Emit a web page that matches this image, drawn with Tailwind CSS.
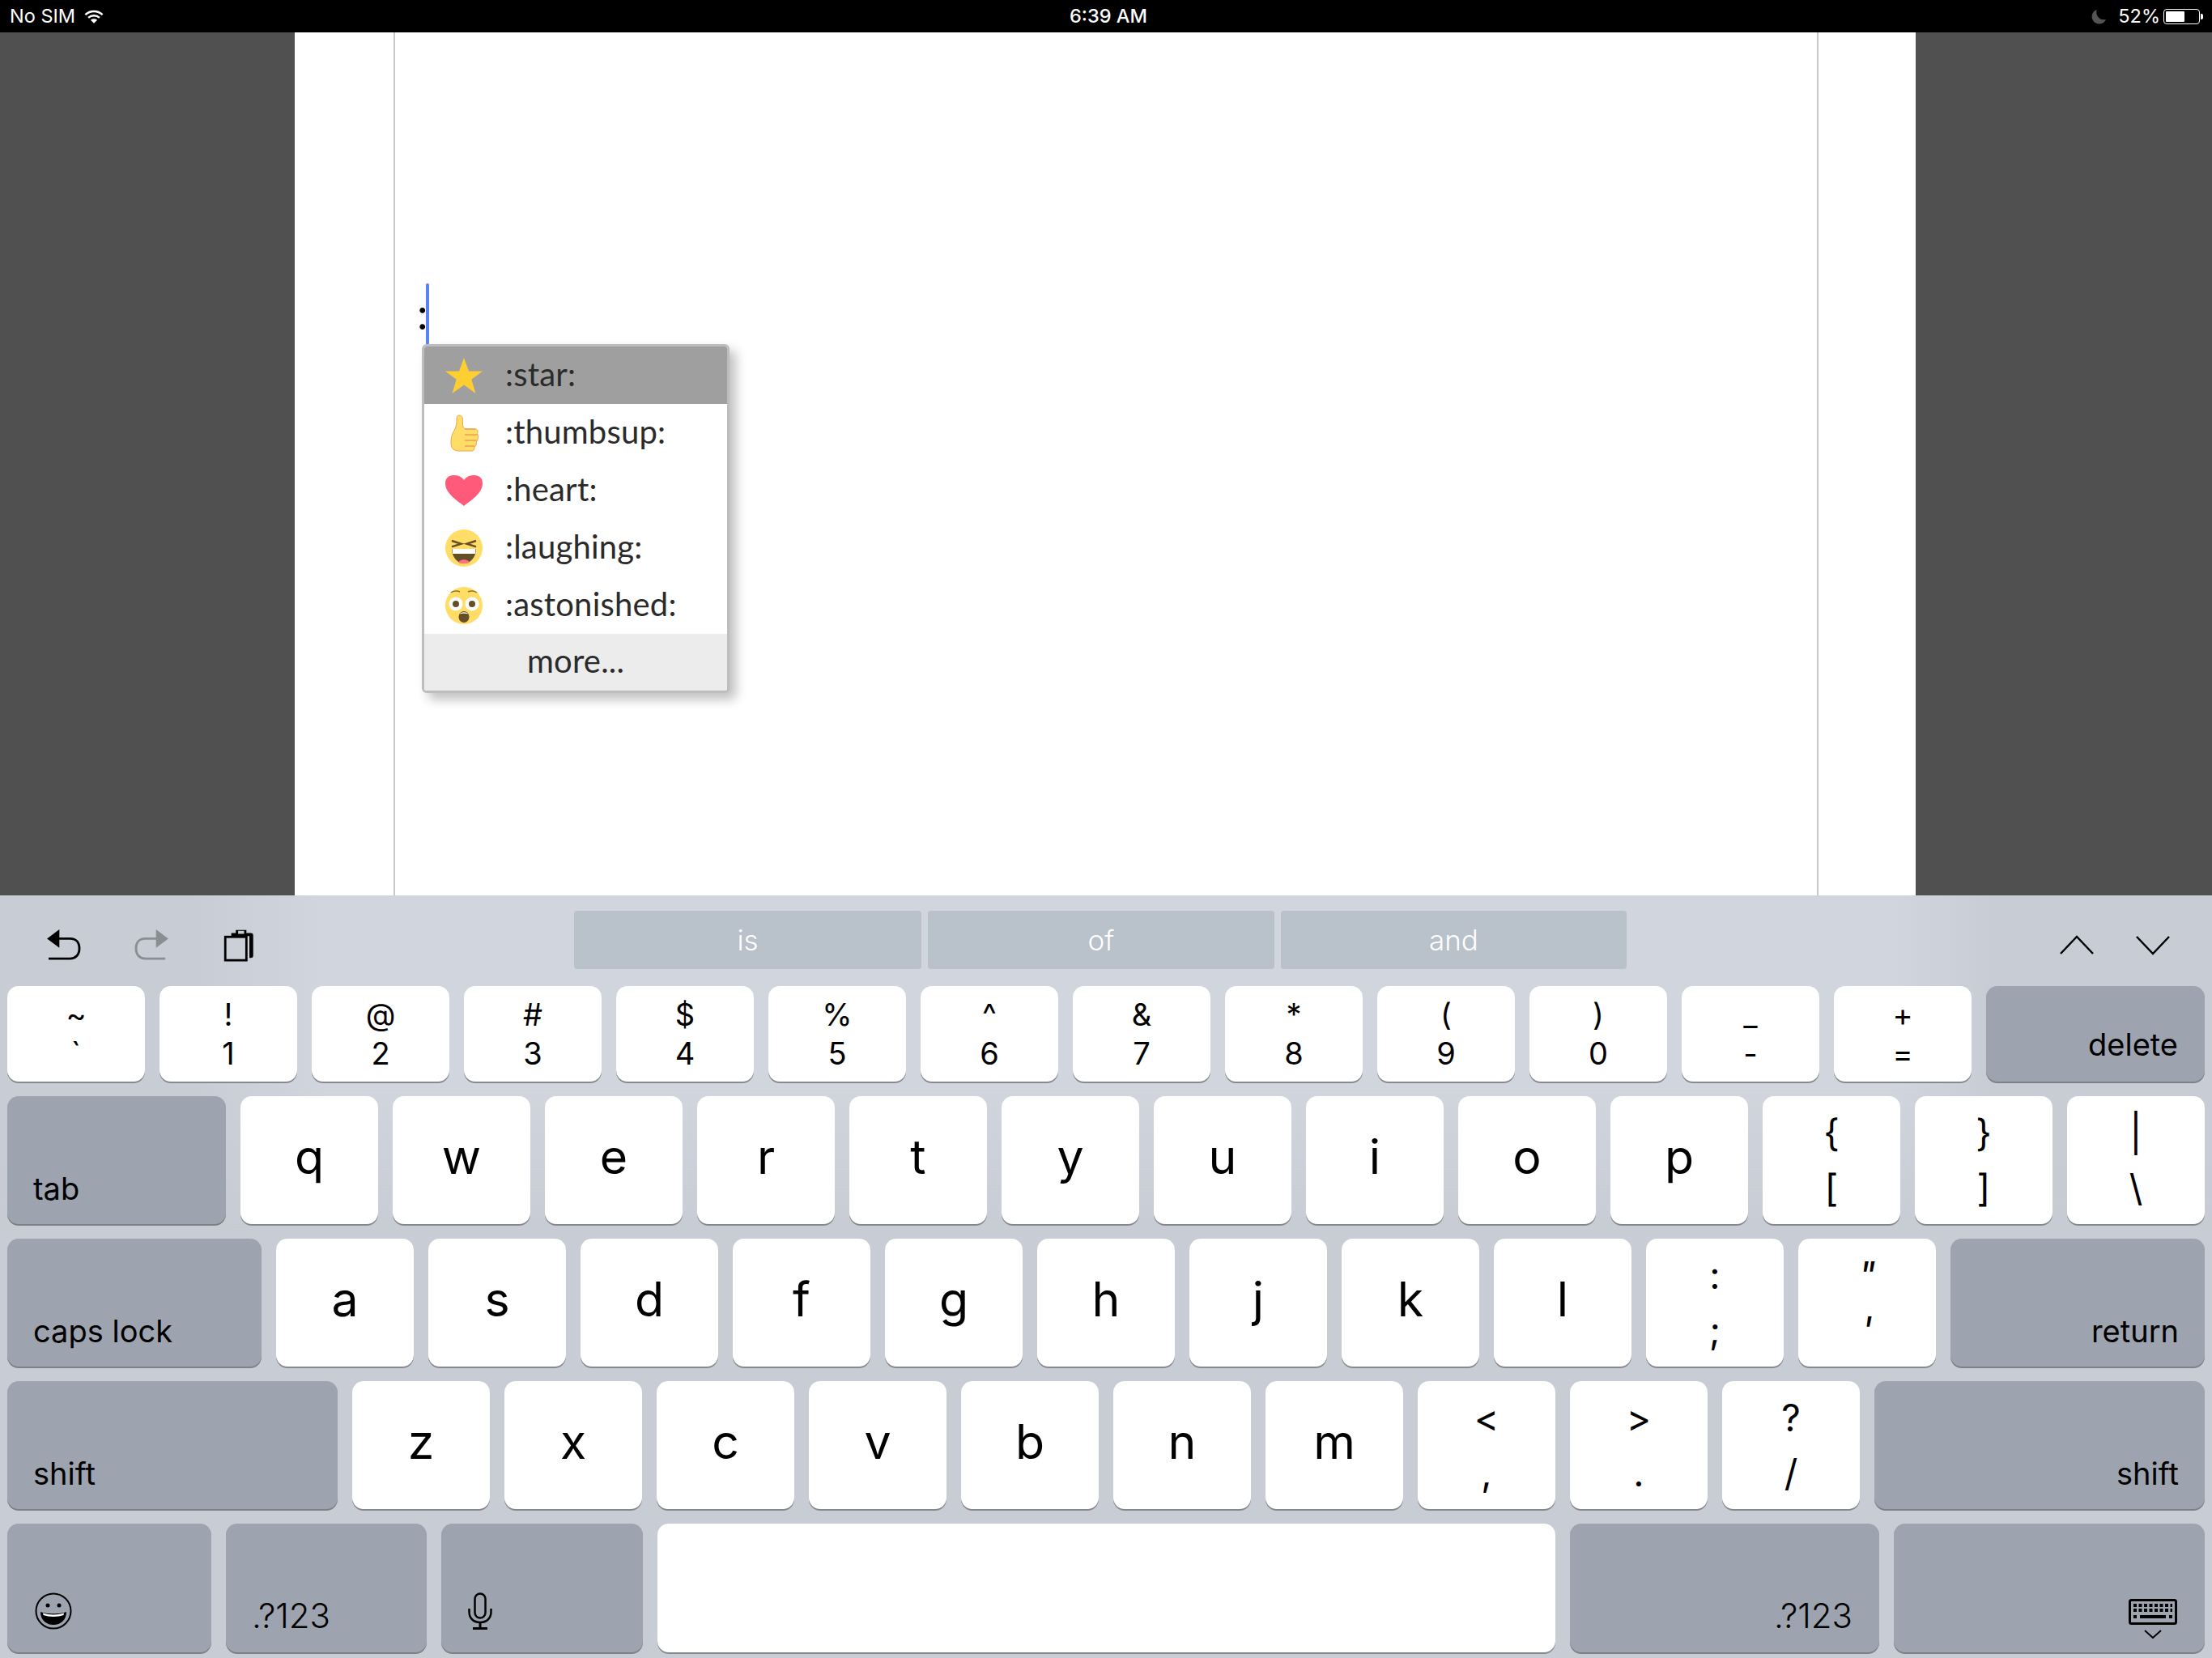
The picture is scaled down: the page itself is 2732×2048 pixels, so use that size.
<!DOCTYPE html>
<html lang="en">
<head>
    <meta charset="UTF-8">
    <title>Emoji Picker</title>
    <script src="https://cdn.jsdelivr.net/npm/@tailwindcss/browser@4"></script>
</head>
<body class="w-[2732px] h-[2048px] overflow-hidden flex flex-col bg-[#505050] font-['Inter',sans-serif]">
    <!-- Status bar -->
    <div class="h-[40px] shrink-0 bg-black text-white text-[23.500px] relative flex items-center justify-between pl-[12px] pr-[11px]">
        <div class="flex items-center gap-[11px]">
            <span>No SIM</span>
            <svg width="24" height="19" viewBox="0 0 26 20" fill="none" stroke="white" stroke-width="2.6">
                <path d="M1.5 7.5C8 1.5 18 1.5 24.5 7.5"/>
                <path d="M5.5 11.5C9.800 7.800 16.200 7.800 20.500 11.500"/>
                <path d="M13 19L8.500 14.600C11.200 12.600 14.800 12.600 17.500 14.600Z" fill="white" stroke="none"/>
            </svg>
        </div>
        <span class="absolute left-[1321px] font-medium">6:39 AM</span>
        <div class="flex items-center">
            <svg width="19" height="19" viewBox="0 0 20 20" class="mr-[14px]"><path d="M7 1A9.500 9.500 0 1 0 19 13.500C13 16 4.500 10 7 1Z" fill="#555"/></svg>
            <span>52%</span>
            <div class="ml-[4px] w-[45px] h-[19px] border border-white rounded-[4px] p-[2px]">
                <div class="w-[23px] h-full bg-white rounded-[1px]"></div>
            </div>
            <div class="w-[3px] h-[7px] bg-white rounded-r-[2px] ml-[1px]"></div>
        </div>
    </div>

    <!-- Document area -->
    <div class="h-[1066px] shrink-0 flex justify-center">
        <div class="w-[2002px] ml-[-2px] h-full bg-white relative px-[122px]">
            <div class="w-[1760px] h-full border-x-2 border-[#c8c8c8] relative">
                <!-- caret and typed colon -->
                <span class="absolute left-[27px] top-[322px] text-[54px] leading-[50px] text-black font-['Lato',sans-serif]">:</span>
                <div class="absolute left-[38px] top-[310px] w-[4px] h-[76px] bg-[#5b82f2] rounded-[2px]"></div>

                <!-- Emoji menu -->
                <div class="absolute left-[33px] top-[385px] w-[380px] border-[3px] border-[#bdbdbd] rounded-[6px] bg-white overflow-hidden shadow-[8px_8px_14px_rgba(0,0,0,0.25)] text-[#2b2b2b] text-[40px] tracking-[0.2px] font-['Lato',sans-serif]">
                    <div class="h-[71px] bg-[#9f9f9f] flex items-center pl-[26px]">
                        <svg width="46" height="46" viewBox="0 0 46 46" class="mr-[28px]"><path d="M23 1L29 17.500H46L32.300 27.800L37.500 45L23 34.500L8.500 45L13.700 27.800L0 17.500H17Z" fill="#ffce31"/></svg>
                        <span class="mb-[4px]">:star:</span>
                    </div>
                    <div class="h-[71px] flex items-center pl-[26px]">
                        <svg width="46" height="46" viewBox="0 0 46 46" class="mr-[28px]">
                            <path d="M17 1C21 1 22 5 21.500 10C21 14 22 17 25 18H37C39 18 40 19 40 21C40 22.500 40 23 39 24C41 25 41 28 40 30C40 32 39 33 38 34C39 36 38 39 36 40C36 43 35 45 33 45H18C11 45 7 43 7 35C7 27 9 23 12 18C14 14 14 10 14 5C14 3 15 1 17 1Z" fill="#ffdd67" stroke="#eba352" stroke-width="1"/>
                            <path d="M24 18H37M24 25H40M24 32H39M24 39H36" stroke="#eba352" stroke-width="1.500" fill="none"/>
                        </svg>
                        <span class="mb-[4px]">:thumbsup:</span>
                    </div>
                    <div class="h-[71px] flex items-center pl-[26px]">
                        <svg width="46" height="46" viewBox="0 0 46 46" class="mr-[28px]"><path d="M23 42C16 36 0 27 0 14C0 6 6 4 11 4C17 4 21 7 23 10C25 7 29 4 35 4C40 4 46 6 46 14C46 27 30 36 23 42Z" fill="#ff5a79"/></svg>
                        <span class="mb-[4px]">:heart:</span>
                    </div>
                    <div class="h-[71px] flex items-center pl-[26px]">
                        <svg width="46" height="46" viewBox="0 0 46 46" class="mr-[28px]">
                            <circle cx="23" cy="23" r="23" fill="#ffdd67"/>
                            <path d="M8 24H38C38 34 31 42 23 42C15 42 8 34 8 24Z" fill="#664e27"/>
                            <path d="M8.500 24H37.500L37 30H9Z" fill="white"/>
                            <path d="M16 41C18 36 28 36 30 41C27 42.500 19 42.500 16 41Z" fill="#ff717f"/>
                            <path d="M8 14L19.500 17.800L8 21.400M38 14L26.500 17.800L38 21.400" stroke="#664e27" stroke-width="2.500" fill="none"/>
                        </svg>
                        <span class="mb-[4px]">:laughing:</span>
                    </div>
                    <div class="h-[71px] flex items-center pl-[26px]">
                        <svg width="46" height="46" viewBox="0 0 46 46" class="mr-[28px]">
                            <circle cx="23" cy="23" r="23" fill="#ffdd67"/>
                            <circle cx="13" cy="21" r="8.500" fill="white"/>
                            <circle cx="33" cy="21" r="8.500" fill="white"/>
                            <circle cx="13" cy="21" r="4" fill="#664e27"/>
                            <circle cx="33" cy="21" r="4" fill="#664e27"/>
                            <ellipse cx="23" cy="37" rx="6.500" ry="7" fill="#664e27"/>
                            <path d="M17.500 33.500C20 30.500 26 30.500 28.500 33.500C26 32.500 20 32.500 17.500 33.500Z" fill="white"/>
                            <path d="M7 7C10 4.500 15 4.500 18 6M28 6C31 4.500 36 4.500 39 7" stroke="#917524" stroke-width="1.500" fill="none"/>
                        </svg>
                        <span class="mb-[4px]">:astonished:</span>
                    </div>
                    <div class="h-[70px] bg-[#ececec] flex items-center justify-center"><span class="mb-[4px]">more...</span></div>
                </div>
            </div>
        </div>
    </div>

    <!-- Keyboard -->
    <div class="flex-1 relative isolate bg-[#c8ccd4] flex flex-col gap-[18px] px-[9px] text-black">
        <!-- lighter band where the white page blurs through -->
        <div class="absolute -z-10 inset-x-0 top-0 h-[420px] bg-[linear-gradient(90deg,#c8ccd4_0,#c8ccd4_240px,#d1d5dd_400px,#d1d5dd_2340px,#c8ccd4_2460px,#c8ccd4_100%)] [mask-image:linear-gradient(to_bottom,black_55%,transparent)]"></div>

        <!-- Shortcut bar -->
        <div class="h-[94px] shrink-0 relative flex items-center pt-[28px]">
            <svg width="42" height="38" viewBox="0 0 44 40" class="ml-[49px]" fill="none">
                <path d="M0 12L16 0V24Z" fill="black"/>
                <path d="M12 12H30C38 12 42 17 42 25C42 33 37 38 30 38H2" stroke="black" stroke-width="3"/>
            </svg>
            <svg width="42" height="38" viewBox="0 0 44 40" class="ml-[66px]" fill="none">
                <path d="M44 12L28 0V24Z" fill="#8a8d92"/>
                <path d="M32 12H14C6 12 2 17 2 25C2 33 7 38 14 38H40" stroke="#8a8d92" stroke-width="3"/>
            </svg>
            <svg width="38" height="41" viewBox="0 0 40 44" class="ml-[68px]" fill="none">
                <path d="M10 6H16V2H30V6H36C38 6 39 7 39 9V36C39 38 38 39 36 39H34V10H10Z" fill="black"/>
                <path d="M19 3H27V7H19Z" fill="#c9cdd5"/>
                <rect x="2" y="11" width="28" height="31" stroke="black" stroke-width="3"/>
            </svg>
            <div class="absolute left-[700px] top-[19px] flex gap-[8px] text-white text-[35px]">
                <div class="w-[429px] h-[72px] bg-[#b9c1ca] rounded-[4px] flex items-center justify-center font-light">is</div>
                <div class="w-[428px] h-[72px] bg-[#b9c1ca] rounded-[4px] flex items-center justify-center font-light">of</div>
                <div class="w-[427px] h-[72px] bg-[#b9c1ca] rounded-[4px] flex items-center justify-center font-light">and</div>
            </div>
            <svg width="44" height="26" viewBox="0 0 44 26" class="absolute left-[2534px] top-[48px]" fill="none"><path d="M2 24L22 3L42 24" stroke="black" stroke-width="2.500"/></svg>
            <svg width="44" height="26" viewBox="0 0 44 26" class="absolute left-[2628px] top-[48px]" fill="none"><path d="M2 3L22 24L42 3" stroke="black" stroke-width="2.500"/></svg>
        </div>

        <!-- Row 1 -->
        <div class="h-[118px] shrink-0 flex gap-[18px]">
            <div class="w-[170px] bg-white rounded-[14px] shadow-[0_2px_0_#85888e] flex flex-col items-center justify-center text-[38px] leading-[48px]"><span>~</span><span>`</span></div>
            <div class="w-[170px] bg-white rounded-[14px] shadow-[0_2px_0_#85888e] flex flex-col items-center justify-center text-[38px] leading-[48px]"><span>!</span><span>1</span></div>
            <div class="w-[170px] bg-white rounded-[14px] shadow-[0_2px_0_#85888e] flex flex-col items-center justify-center text-[38px] leading-[48px]"><span>@</span><span>2</span></div>
            <div class="w-[170px] bg-white rounded-[14px] shadow-[0_2px_0_#85888e] flex flex-col items-center justify-center text-[38px] leading-[48px]"><span>#</span><span>3</span></div>
            <div class="w-[170px] bg-white rounded-[14px] shadow-[0_2px_0_#85888e] flex flex-col items-center justify-center text-[38px] leading-[48px]"><span>$</span><span>4</span></div>
            <div class="w-[170px] bg-white rounded-[14px] shadow-[0_2px_0_#85888e] flex flex-col items-center justify-center text-[38px] leading-[48px]"><span>%</span><span>5</span></div>
            <div class="w-[170px] bg-white rounded-[14px] shadow-[0_2px_0_#85888e] flex flex-col items-center justify-center text-[38px] leading-[48px]"><span>^</span><span>6</span></div>
            <div class="w-[170px] bg-white rounded-[14px] shadow-[0_2px_0_#85888e] flex flex-col items-center justify-center text-[38px] leading-[48px]"><span>&amp;</span><span>7</span></div>
            <div class="w-[170px] bg-white rounded-[14px] shadow-[0_2px_0_#85888e] flex flex-col items-center justify-center text-[38px] leading-[48px]"><span>*</span><span>8</span></div>
            <div class="w-[170px] bg-white rounded-[14px] shadow-[0_2px_0_#85888e] flex flex-col items-center justify-center text-[38px] leading-[48px]"><span>(</span><span>9</span></div>
            <div class="w-[170px] bg-white rounded-[14px] shadow-[0_2px_0_#85888e] flex flex-col items-center justify-center text-[38px] leading-[48px]"><span>)</span><span>0</span></div>
            <div class="w-[170px] bg-white rounded-[14px] shadow-[0_2px_0_#85888e] flex flex-col items-center justify-center text-[38px] leading-[48px]"><span>_</span><span>-</span></div>
            <div class="w-[170px] bg-white rounded-[14px] shadow-[0_2px_0_#85888e] flex flex-col items-center justify-center text-[38px] leading-[48px]"><span>+</span><span>=</span></div>
            <div class="flex-1 bg-[#9ea4af] rounded-[14px] shadow-[0_2px_0_#7c8087] flex items-end justify-end pr-[33px] pb-[23px] text-[38px] leading-[45px]">delete</div>
        </div>

        <!-- Row 2 -->
        <div class="h-[158px] shrink-0 flex gap-[18px]">
            <div class="w-[270px] bg-[#9ea4af] rounded-[14px] shadow-[0_2px_0_#7c8087] flex items-end pl-[32px] pb-[21px] text-[38px] leading-[45px]">tab</div>
            <div class="w-[170px] bg-white rounded-[14px] shadow-[0_2px_0_#85888e] flex items-center justify-center pb-[8px] text-[59px]">q</div>
            <div class="w-[170px] bg-white rounded-[14px] shadow-[0_2px_0_#85888e] flex items-center justify-center pb-[8px] text-[59px]">w</div>
            <div class="w-[170px] bg-white rounded-[14px] shadow-[0_2px_0_#85888e] flex items-center justify-center pb-[8px] text-[59px]">e</div>
            <div class="w-[170px] bg-white rounded-[14px] shadow-[0_2px_0_#85888e] flex items-center justify-center pb-[8px] text-[59px]">r</div>
            <div class="w-[170px] bg-white rounded-[14px] shadow-[0_2px_0_#85888e] flex items-center justify-center pb-[8px] text-[59px]">t</div>
            <div class="w-[170px] bg-white rounded-[14px] shadow-[0_2px_0_#85888e] flex items-center justify-center pb-[8px] text-[59px]">y</div>
            <div class="w-[170px] bg-white rounded-[14px] shadow-[0_2px_0_#85888e] flex items-center justify-center pb-[8px] text-[59px]">u</div>
            <div class="w-[170px] bg-white rounded-[14px] shadow-[0_2px_0_#85888e] flex items-center justify-center pb-[8px] text-[59px]">i</div>
            <div class="w-[170px] bg-white rounded-[14px] shadow-[0_2px_0_#85888e] flex items-center justify-center pb-[8px] text-[59px]">o</div>
            <div class="w-[170px] bg-white rounded-[14px] shadow-[0_2px_0_#85888e] flex items-center justify-center pb-[8px] text-[59px]">p</div>
            <div class="w-[170px] bg-white rounded-[14px] shadow-[0_2px_0_#85888e] flex flex-col items-center justify-center text-[46px] leading-[68px]"><span>{</span><span>[</span></div>
            <div class="w-[170px] bg-white rounded-[14px] shadow-[0_2px_0_#85888e] flex flex-col items-center justify-center text-[46px] leading-[68px]"><span>}</span><span>]</span></div>
            <div class="flex-1 bg-white rounded-[14px] shadow-[0_2px_0_#85888e] flex flex-col items-center justify-center text-[46px] leading-[68px]"><span>|</span><span>\</span></div>
        </div>

        <!-- Row 3 -->
        <div class="h-[158px] shrink-0 flex gap-[18px]">
            <div class="w-[314px] bg-[#9ea4af] rounded-[14px] shadow-[0_2px_0_#7c8087] flex items-end pl-[32px] pb-[21px] text-[38px] leading-[45px]">caps lock</div>
            <div class="w-[170px] bg-white rounded-[14px] shadow-[0_2px_0_#85888e] flex items-center justify-center pb-[8px] text-[59px]">a</div>
            <div class="w-[170px] bg-white rounded-[14px] shadow-[0_2px_0_#85888e] flex items-center justify-center pb-[8px] text-[59px]">s</div>
            <div class="w-[170px] bg-white rounded-[14px] shadow-[0_2px_0_#85888e] flex items-center justify-center pb-[8px] text-[59px]">d</div>
            <div class="w-[170px] bg-white rounded-[14px] shadow-[0_2px_0_#85888e] flex items-center justify-center pb-[8px] text-[59px]">f</div>
            <div class="w-[170px] bg-white rounded-[14px] shadow-[0_2px_0_#85888e] flex items-center justify-center pb-[8px] text-[59px]">g</div>
            <div class="w-[170px] bg-white rounded-[14px] shadow-[0_2px_0_#85888e] flex items-center justify-center pb-[8px] text-[59px]">h</div>
            <div class="w-[170px] bg-white rounded-[14px] shadow-[0_2px_0_#85888e] flex items-center justify-center pb-[8px] text-[59px]">j</div>
            <div class="w-[170px] bg-white rounded-[14px] shadow-[0_2px_0_#85888e] flex items-center justify-center pb-[8px] text-[59px]">k</div>
            <div class="w-[170px] bg-white rounded-[14px] shadow-[0_2px_0_#85888e] flex items-center justify-center pb-[8px] text-[59px]">l</div>
            <div class="w-[170px] bg-white rounded-[14px] shadow-[0_2px_0_#85888e] flex flex-col items-center justify-center text-[46px] leading-[68px]"><span>:</span><span>;</span></div>
            <div class="w-[170px] bg-white rounded-[14px] shadow-[0_2px_0_#85888e] flex flex-col items-center justify-center text-[46px] leading-[68px] italic"><span>"</span><span>'</span></div>
            <div class="flex-1 bg-[#9ea4af] rounded-[14px] shadow-[0_2px_0_#7c8087] flex items-end justify-end pr-[32px] pb-[21px] text-[38px] leading-[45px]">return</div>
        </div>

        <!-- Row 4 -->
        <div class="h-[158px] shrink-0 flex gap-[18px]">
            <div class="w-[408px] bg-[#9ea4af] rounded-[14px] shadow-[0_2px_0_#7c8087] flex items-end pl-[32px] pb-[21px] text-[38px] leading-[45px]">shift</div>
            <div class="w-[170px] bg-white rounded-[14px] shadow-[0_2px_0_#85888e] flex items-center justify-center pb-[8px] text-[59px]">z</div>
            <div class="w-[170px] bg-white rounded-[14px] shadow-[0_2px_0_#85888e] flex items-center justify-center pb-[8px] text-[59px]">x</div>
            <div class="w-[170px] bg-white rounded-[14px] shadow-[0_2px_0_#85888e] flex items-center justify-center pb-[8px] text-[59px]">c</div>
            <div class="w-[170px] bg-white rounded-[14px] shadow-[0_2px_0_#85888e] flex items-center justify-center pb-[8px] text-[59px]">v</div>
            <div class="w-[170px] bg-white rounded-[14px] shadow-[0_2px_0_#85888e] flex items-center justify-center pb-[8px] text-[59px]">b</div>
            <div class="w-[170px] bg-white rounded-[14px] shadow-[0_2px_0_#85888e] flex items-center justify-center pb-[8px] text-[59px]">n</div>
            <div class="w-[170px] bg-white rounded-[14px] shadow-[0_2px_0_#85888e] flex items-center justify-center pb-[8px] text-[59px]">m</div>
            <div class="w-[170px] bg-white rounded-[14px] shadow-[0_2px_0_#85888e] flex flex-col items-center justify-center text-[46px] leading-[68px]"><span>&lt;</span><span>,</span></div>
            <div class="w-[170px] bg-white rounded-[14px] shadow-[0_2px_0_#85888e] flex flex-col items-center justify-center text-[46px] leading-[68px]"><span>&gt;</span><span>.</span></div>
            <div class="w-[170px] bg-white rounded-[14px] shadow-[0_2px_0_#85888e] flex flex-col items-center justify-center text-[46px] leading-[68px]"><span>?</span><span>/</span></div>
            <div class="flex-1 bg-[#9ea4af] rounded-[14px] shadow-[0_2px_0_#7c8087] flex items-end justify-end pr-[32px] pb-[21px] text-[38px] leading-[45px]">shift</div>
        </div>

        <!-- Row 5 -->
        <div class="h-[159px] shrink-0 flex gap-[18px]">
            <div class="w-[252px] bg-[#9ea4af] rounded-[14px] shadow-[0_2px_0_#7c8087] flex items-end pl-[34px] pb-[28px]">
                <svg width="46" height="46" viewBox="0 0 46 46" fill="none">
                    <circle cx="23" cy="23" r="21.500" stroke="black" stroke-width="2"/>
                    <circle cx="16" cy="16" r="2.500" fill="black"/>
                    <circle cx="30" cy="16" r="2.500" fill="black"/>
                    <path d="M7 24C14 27 32 27 39 24C39 34 32 40 23 40C14 40 7 34 7 24Z" fill="black"/>
                    <path d="M10 25.500C17 28 29 28 36 25.500L35.500 28C29 30.500 17 30.500 10.500 28Z" fill="white"/>
                </svg>
            </div>
            <div class="w-[248px] bg-[#9ea4af] rounded-[14px] shadow-[0_2px_0_#7c8087] flex items-end pl-[32px] pb-[20px] text-[42px] leading-[50px] font-light">.?123</div>
            <div class="w-[249px] bg-[#9ea4af] rounded-[14px] shadow-[0_2px_0_#7c8087] flex items-end pl-[33px] pb-[28px]">
                <svg width="30" height="46" viewBox="0 0 30 46" fill="none">
                    <rect x="8.500" y="1.500" width="13" height="30" rx="6.500" stroke="black" stroke-width="2.500"/>
                    <path d="M1.500 20V24C1.500 32 7 37 15 37C23 37 28.500 32 28.500 24V20" stroke="black" stroke-width="2.500"/>
                    <path d="M15 37V44M6 44.500H24" stroke="black" stroke-width="3"/>
                </svg>
            </div>
            <div class="w-[1109px] bg-white rounded-[14px] shadow-[0_2px_0_#85888e]"></div>
            <div class="w-[382px] bg-[#9ea4af] rounded-[14px] shadow-[0_2px_0_#7c8087] flex items-end justify-end pr-[33px] pb-[20px] text-[42px] leading-[50px] font-light">.?123</div>
            <div class="flex-1 bg-[#9ea4af] rounded-[14px] shadow-[0_2px_0_#7c8087] flex items-end justify-end pr-[34px] pb-[17px]">
                <svg width="60" height="49" viewBox="0 0 60 49" fill="none">
                    <rect x="1.500" y="1.500" width="57" height="29" rx="2" stroke="black" stroke-width="3"/>
                    <path d="M6 8H54M6 14H54" stroke="black" stroke-width="4" stroke-dasharray="4 2.500"/>
                    <path d="M6 22H10M14 22H46M50 22H54" stroke="black" stroke-width="4"/>
                    <path d="M20 39L30 48L40 39" stroke="black" stroke-width="2"/>
                </svg>
            </div>
        </div>
    </div>
</body>
</html>
